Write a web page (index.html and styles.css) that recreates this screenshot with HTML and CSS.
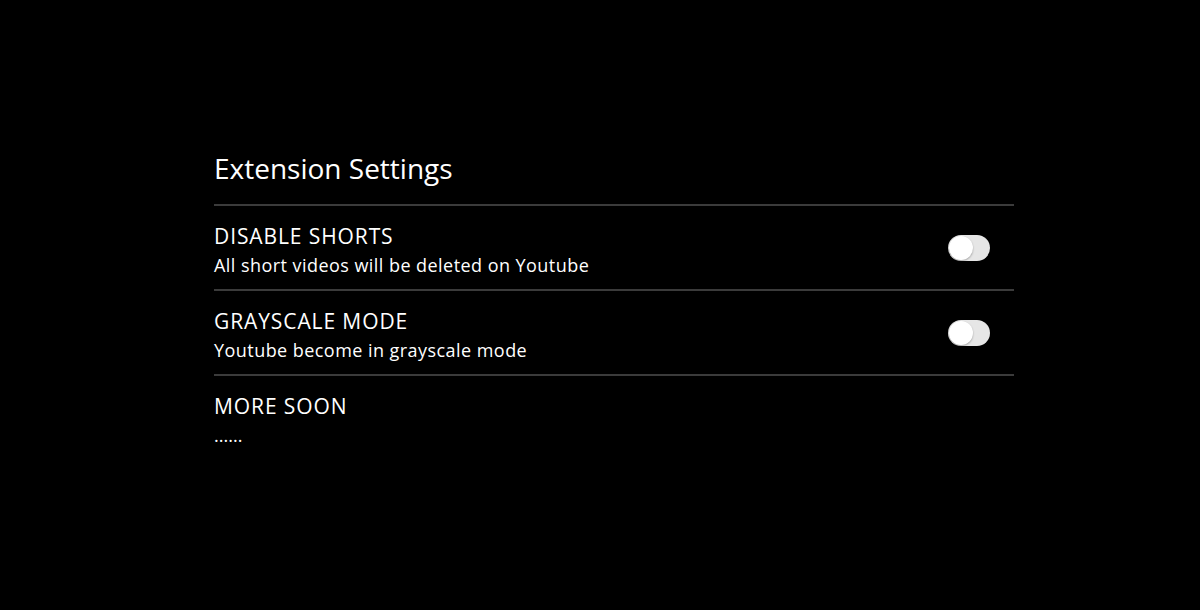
FILE: index.html
```html
<!DOCTYPE html>
<html>
<head>
<meta charset="utf-8">
<link rel="stylesheet" href="styles.css">
</head>
<body>
<main class="settings">
  <h1 class="title">Extension Settings</h1>
  <section class="row">
    <div class="text">
      <div class="label">DISABLE SHORTS</div>
      <div class="desc">All short videos will be deleted on Youtube</div>
    </div>
    <span class="toggle"><span class="knob"></span></span>
  </section>
  <section class="row">
    <div class="text">
      <div class="label">GRAYSCALE MODE</div>
      <div class="desc">Youtube become in grayscale mode</div>
    </div>
    <span class="toggle"><span class="knob"></span></span>
  </section>
  <section class="row last">
    <div class="text">
      <div class="label">MORE SOON</div>
      <div class="desc dots">......</div>
    </div>
  </section>
</main>
</body>
</html>
```

FILE: styles.css
```css
html, body {
  margin: 0;
  padding: 0;
  background: #000;
  color: #fff;
  font-family: "Open Sans", "Noto Sans", sans-serif;
}
.settings {
  width: 800px;
  margin-left: 214px;
  padding-top: 148px;
}
.title {
  margin: 0;
  font-size: 28px;
  font-weight: 400;
  line-height: 40px;
  padding-bottom: 16px;
  border-bottom: 2px solid #3b3b3b;
}
.row {
  display: flex;
  align-items: flex-start;
  justify-content: space-between;
  box-sizing: border-box;
  height: 85px;
  padding-top: 16px;
  border-bottom: 2px solid #3b3b3b;
}
.row.last {
  border-bottom: none;
}
.label {
  font-size: 21px;
  letter-spacing: 0.9px;
  line-height: 28px;
}
.desc {
  margin-top: 1px;
  font-size: 18px;
  letter-spacing: 0.45px;
  line-height: 28px;
}
.desc.dots {
  letter-spacing: 0;
}
.toggle {
  position: relative;
  align-self: center;
  width: 42px;
  height: 26px;
  border-radius: 13px;
  background: #e6e6e6;
  margin-right: 24px;
  margin-top: -16px;
}
.knob {
  position: absolute;
  left: 1px;
  top: 1px;
  width: 24px;
  height: 24px;
  border-radius: 50%;
  background: #fff;
  box-shadow: 0 1px 2px rgba(0,0,0,0.3);
}
```
